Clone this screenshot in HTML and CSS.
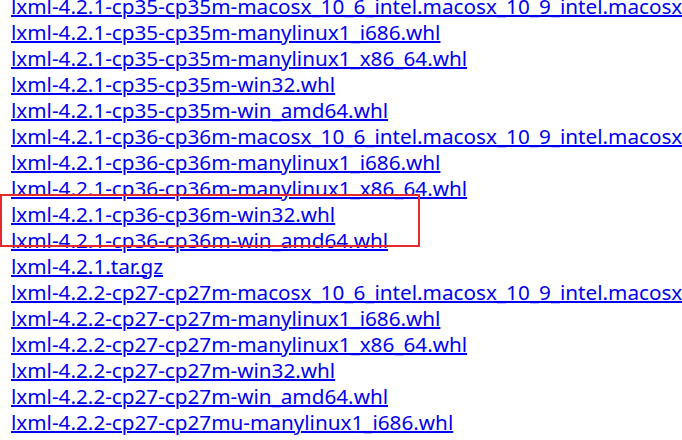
FILE: index.html
```html
<!DOCTYPE html>
<html>
<head>
<meta charset="utf-8">
<link rel="stylesheet" href="styles.css">
</head>
<body>
<div class="page">
<ul class="files">
<li><a href="#">lxml-4.2.1-cp35-cp35m-macosx_10_6_intel.macosx_10_9_intel.macosx_</a></li>
<li><a href="#">lxml-4.2.1-cp35-cp35m-manylinux1_i686.whl</a></li>
<li><a href="#">lxml-4.2.1-cp35-cp35m-manylinux1_x86_64.whl</a></li>
<li><a href="#">lxml-4.2.1-cp35-cp35m-win32.whl</a></li>
<li><a href="#">lxml-4.2.1-cp35-cp35m-win_amd64.whl</a></li>
<li><a href="#">lxml-4.2.1-cp36-cp36m-macosx_10_6_intel.macosx_10_9_intel.macosx_</a></li>
<li><a href="#">lxml-4.2.1-cp36-cp36m-manylinux1_i686.whl</a></li>
<li><a href="#">lxml-4.2.1-cp36-cp36m-manylinux1_x86_64.whl</a></li>
<li><a href="#">lxml-4.2.1-cp36-cp36m-win32.whl</a></li>
<li><a href="#">lxml-4.2.1-cp36-cp36m-win_amd64.whl</a></li>
<li><a href="#">lxml-4.2.1.tar.gz</a></li>
<li><a href="#">lxml-4.2.2-cp27-cp27m-macosx_10_6_intel.macosx_10_9_intel.macosx_</a></li>
<li><a href="#">lxml-4.2.2-cp27-cp27m-manylinux1_i686.whl</a></li>
<li><a href="#">lxml-4.2.2-cp27-cp27m-manylinux1_x86_64.whl</a></li>
<li><a href="#">lxml-4.2.2-cp27-cp27m-win32.whl</a></li>
<li><a href="#">lxml-4.2.2-cp27-cp27m-win_amd64.whl</a></li>
<li><a href="#">lxml-4.2.2-cp27-cp27mu-manylinux1_i686.whl</a></li>
</ul>
<div class="highlight"></div>
</div>
</body>
</html>
```
FILE: styles.css
```css
html, body {
  margin: 0;
  padding: 0;
  background: #ffffff;
  overflow: hidden;
}
.page {
  position: relative;
  width: 682px;
  height: 440px;
  overflow: hidden;
}
.files {
  list-style: none;
  margin: -7px 0 0 0;
  padding: 0 0 0 11px;
  font-family: "Noto Sans", "Open Sans", sans-serif;
  font-size: 20.7px;
  line-height: 26px;
  white-space: nowrap;
}
.files a {
  color: #0000f0;
  text-decoration: underline;
  text-decoration-thickness: 2px;
}
.highlight {
  position: absolute;
  left: 0;
  top: 194px;
  width: 420px;
  height: 53px;
  box-sizing: border-box;
  border: 2px solid #e52a2e;
}
```
